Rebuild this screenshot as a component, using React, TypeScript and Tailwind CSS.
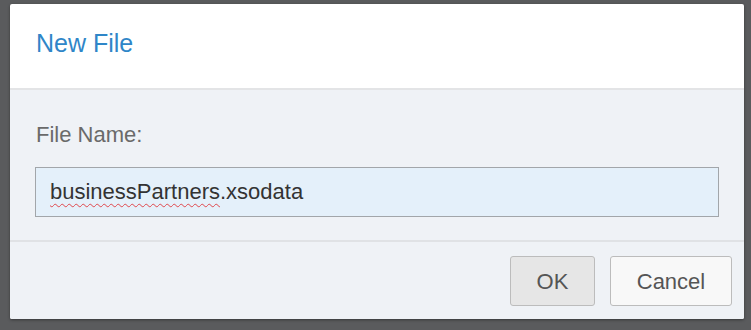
export default function App() {
  return (
    <div
      className="h-[330px] w-[751px] bg-[#5a5b5d] pl-[10px] pt-[4px]"
      style={{ fontFamily: '"Liberation Sans", Arial, sans-serif' }}
    >
      <div className="flex h-[315px] w-[734px] flex-col overflow-hidden rounded-[2px] bg-white shadow-[0_1px_3px_rgba(0,0,0,0.4)]">
        {/* Header */}
        <div className="h-[86px] border-b-2 border-[#e3e4e6] pl-[26px] pt-[27px]">
          <h1 className="text-[25px] leading-none text-[#2f86c8]">New File</h1>
        </div>

        {/* Body */}
        <div className="flex h-[152px] flex-col border-b-2 border-[#e0e2e5] bg-[#eff2f6] pl-[25px] pt-[34px]">
          <label className="pl-[1px] text-[22px] leading-none text-[#6a6a6a]">File Name:</label>
          <div className="mt-[21px] flex h-[50px] w-[684px] items-center border border-[#a2a6aa] bg-[#e4f0fa] pl-[14px] text-[22px] leading-none text-[#333]">
            <span className="underline decoration-[#e0474c] decoration-wavy decoration-[1px] underline-offset-[4px]">
              businessPartners
            </span>
            <span>.xsodata</span>
          </div>
        </div>

        {/* Footer */}
        <div className="flex flex-1 items-start justify-end gap-[15px] bg-[#eff2f6] pr-[12px] pt-[14px]">
          <button className="h-[50px] w-[85px] rounded-[3px] border border-[#bcbcbc] bg-[#e6e6e6] text-[22px] text-[#555]">
            OK
          </button>
          <button className="h-[50px] w-[122px] rounded-[3px] border border-[#bcbcbc] bg-[#f8f8f8] text-[22px] text-[#555]">
            Cancel
          </button>
        </div>
      </div>
    </div>
  );
}
